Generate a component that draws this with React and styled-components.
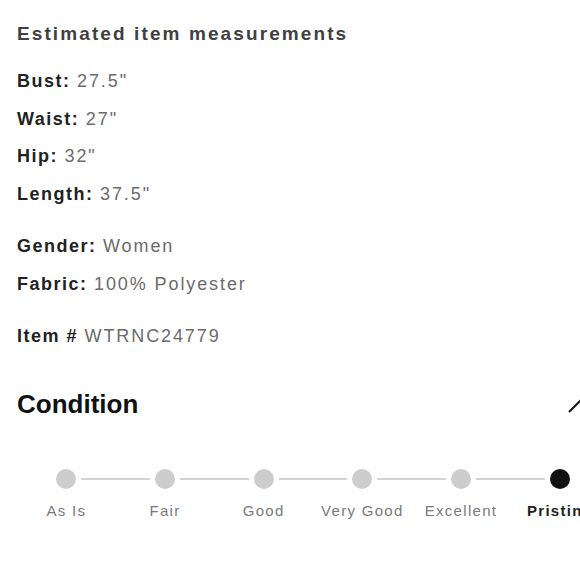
import React from 'react';
import styled, { createGlobalStyle } from 'styled-components';

const GlobalStyle = createGlobalStyle`
  html, body {
    margin: 0;
    padding: 0;
    background: #fff;
    overflow: hidden;
  }
  body {
    font-family: "Liberation Sans", Arial, sans-serif;
  }
`;

const measurements = [
  { label: 'Bust:', value: '27.5"' },
  { label: 'Waist:', value: '27"' },
  { label: 'Hip:', value: '32"' },
  { label: 'Length:', value: '37.5"' },
];

const details = [
  { label: 'Gender:', value: 'Women' },
  { label: 'Fabric:', value: '100% Polyester' },
];

const conditions = ['As Is', 'Fair', 'Good', 'Very Good', 'Excellent', 'Pristine'];
const currentCondition = 5;

const App = () => {
  return (
    <>
      <GlobalStyle />
      <Page>
        <Heading>Estimated item measurements</Heading>

        <Group>
          {measurements.map((m) => (
            <Row key={m.label}>
              <Label>{m.label}</Label> <Value>{m.value}</Value>
            </Row>
          ))}
        </Group>

        <Group>
          {details.map((d) => (
            <Row key={d.label}>
              <Label>{d.label}</Label> <Value>{d.value}</Value>
            </Row>
          ))}
        </Group>

        <Group>
          <Row>
            <Label>Item #</Label> <Value>WTRNC24779</Value>
          </Row>
        </Group>

        <SectionHeader>
          <SectionTitle>Condition</SectionTitle>
          <Chevron viewBox="0 0 28 16">
            <path d="M1 15 L14 2 L27 15" />
          </Chevron>
        </SectionHeader>

        <Steps>
          {conditions.map((c, i) => (
            <Step key={c} $first={i === 0} $last={i === conditions.length - 1}>
              <Dot $active={i === currentCondition} />
              <StepLabel $active={i === currentCondition}>{c}</StepLabel>
            </Step>
          ))}
        </Steps>
      </Page>
    </>
  );
};

// Styled components
const Page = styled.div`
  width: 592px;
  padding: 22px 0 0 17px;
`;

const Heading = styled.h2`
  margin: 0 0 17px;
  font-size: 19px;
  line-height: 24px;
  font-weight: bold;
  letter-spacing: 2.1px;
  color: #404040;
`;

const Group = styled.div`
  display: flex;
  flex-direction: column;
  margin-bottom: 15px;
`;

const Row = styled.div`
  font-size: 18px;
  line-height: 37.5px;
  letter-spacing: 1.5px;
`;

const Label = styled.span`
  font-weight: bold;
  color: #222;
`;

const Value = styled.span`
  font-weight: normal;
  color: #6b6b6b;
  letter-spacing: 1.9px;
`;

const SectionHeader = styled.div`
  display: flex;
  justify-content: space-between;
  align-items: center;
  margin: 29px 13px 0 0;
  height: 40px;
`;

const SectionTitle = styled.h3`
  margin: 0;
  font-size: 26px;
  font-weight: bold;
  color: #111;
`;

const Chevron = styled.svg`
  width: 28px;
  height: 16px;
  fill: none;
  stroke: #1a1a1a;
  stroke-width: 2.2;
`;

const Steps = styled.div`
  display: grid;
  grid-template-columns: repeat(6, 1fr);
  margin-top: 44px;
`;

const Step = styled.div`
  position: relative;
  display: flex;
  flex-direction: column;
  align-items: center;
  gap: 13px;

  &::before,
  &::after {
    content: '';
    position: absolute;
    top: 9px;
    height: 2px;
    background: #d4d4d4;
  }
  &::before {
    left: 0;
    right: calc(50% + 15px);
    display: ${(p) => (p.$first ? 'none' : 'block')};
  }
  &::after {
    left: calc(50% + 15px);
    right: 0;
    display: ${(p) => (p.$last ? 'none' : 'block')};
  }
`;

const Dot = styled.span`
  width: 20px;
  height: 20px;
  border-radius: 50%;
  background: ${(p) => (p.$active ? '#111' : '#cdcdcd')};
`;

const StepLabel = styled.span`
  font-size: 15px;
  letter-spacing: 1.3px;
  white-space: nowrap;
  font-weight: ${(p) => (p.$active ? 'bold' : 'normal')};
  color: ${(p) => (p.$active ? '#222' : '#7a7a7a')};
`;

export default App;
